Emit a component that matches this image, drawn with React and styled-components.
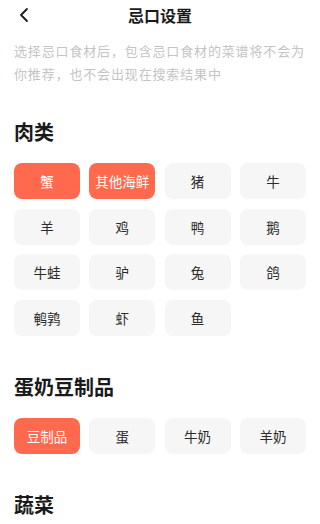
import React, { useState } from 'react';
import styled, { createGlobalStyle } from 'styled-components';

const GlobalStyle = createGlobalStyle`
  html, body {
    margin: 0;
    padding: 0;
    background: #fff;
  }
  body {
    font-family: "Noto Sans CJK SC", "Noto Sans", sans-serif;
  }
`;

const Page = styled.div`
  width: 320px;
  height: 524px;
  overflow: hidden;
  background: #fff;
`;

const Header = styled.div`
  position: relative;
  height: 30px;
  display: flex;
  align-items: center;
  justify-content: center;
`;

const BackButton = styled.button`
  position: absolute;
  left: 12px;
  top: 3px;
  width: 24px;
  height: 24px;
  border: none;
  background: none;
  padding: 0;
  display: flex;
  align-items: center;
  justify-content: center;
`;

const Title = styled.div`
  font-size: 16px;
  font-weight: 700;
  color: #1a1a1a;
  line-height: 30px;
`;

const Intro = styled.p`
  margin: 8.5px 0 0;
  padding: 0 14px;
  font-size: 13px;
  letter-spacing: 0.85px;
  line-height: 23px;
  color: #c4c4c4;
  white-space: nowrap;
`;

const Section = styled.section`
  padding: 0 14px;
  margin-top: ${(p) => p.$top}px;
`;

const SectionTitle = styled.h2`
  margin: 0 0 17px;
  font-size: 20px;
  line-height: 28px;
  font-weight: 600;
  color: #1a1a1a;
`;

const ChipGrid = styled.div`
  display: grid;
  grid-template-columns: repeat(4, 66px);
  column-gap: 9.3px;
  row-gap: 9.6px;
`;

const Chip = styled.button`
  height: 36px;
  border: none;
  border-radius: 8px;
  padding: 0;
  font-family: inherit;
  font-size: 13.5px;
  background: ${(p) => (p.$active ? '#ff6a4e' : '#f6f6f6')};
  color: ${(p) => (p.$active ? '#fff' : '#2b2b2b')};
  display: flex;
  align-items: center;
  justify-content: center;
`;

const groups = [
  {
    name: '肉类',
    items: ['蟹', '其他海鲜', '猪', '牛', '羊', '鸡', '鸭', '鹅', '牛蛙', '驴', '兔', '鸽', '鹌鹑', '虾', '鱼'],
  },
  { name: '蛋奶豆制品', items: ['豆制品', '蛋', '牛奶', '羊奶'] },
  { name: '蔬菜', items: [] },
];

export default function App() {
  const [picked, setPicked] = useState(['蟹', '其他海鲜', '豆制品']);

  const toggle = (item) => {
    setPicked(picked.includes(item) ? picked.filter((p) => p !== item) : [...picked, item]);
  };

  return (
    <Page>
      <GlobalStyle />
      <Header>
        <BackButton>
          <svg width="12" height="16" viewBox="0 0 12 16">
            <path d="M9 2 L3 8 L9 14" fill="none" stroke="#1a1a1a" strokeWidth="1.8" strokeLinecap="round" strokeLinejoin="round" />
          </svg>
        </BackButton>
        <Title>忌口设置</Title>
      </Header>
      <Intro>
        选择忌口食材后，包含忌口食材的菜谱将不会为
        <br />
        你推荐，也不会出现在搜索结果中
      </Intro>
      {groups.map((g, i) => (
        <Section key={g.name} $top={i === 0 ? 33.5 : 37}>
          <SectionTitle>{g.name}</SectionTitle>
          {g.items.length > 0 && (
            <ChipGrid>
              {g.items.map((item) => (
                <Chip key={item} $active={picked.includes(item)} onClick={() => toggle(item)}>
                  {item}
                </Chip>
              ))}
            </ChipGrid>
          )}
        </Section>
      ))}
    </Page>
  );
}
